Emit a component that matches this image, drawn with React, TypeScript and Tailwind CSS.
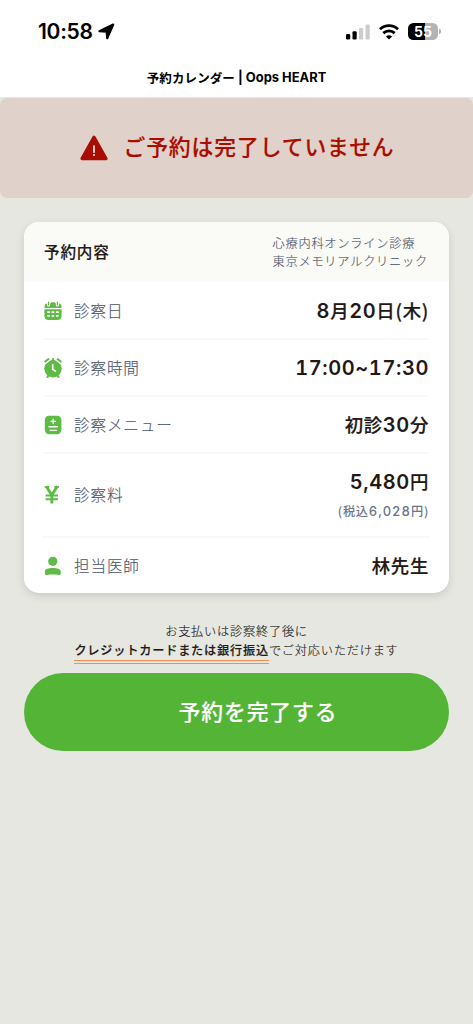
import React from 'react';

const CalendarIcon = () => (
  <svg viewBox="0 0 18 20" className="w-[18px] h-5" fill="#5fba46">
    <path d="M0.4 7V6.4C0.4 4 1.7 2.3 4 2.1h10c2.3 0.2 3.6 1.9 3.6 4.3V7z" />
    <path d="M4.6 0.8v3.2M13.4 0.8v3.2" stroke="#fff" strokeWidth="3.2" strokeLinecap="round" />
    <path d="M4.6 1.2v2.6M13.4 1.2v2.6M7.6 1.8h2.8" stroke="#5fba46" strokeWidth="1.3" strokeLinecap="round" />
    <path d="M0.4 8.2h17.2v6.4c0 3-1.6 4.5-4.5 4.5H4.9c-2.9 0-4.5-1.5-4.5-4.5z" />
    <g fill="#fff">
      <rect x="3.1" y="10.3" width="2.9" height="1.8" rx="0.7" />
      <rect x="7.5" y="10.3" width="2.9" height="1.8" rx="0.7" />
      <rect x="11.9" y="10.3" width="2.9" height="1.8" rx="0.7" />
      <rect x="3.1" y="14" width="2.9" height="1.8" rx="0.7" />
      <rect x="7.5" y="14" width="2.9" height="1.8" rx="0.7" />
      <rect x="11.9" y="14" width="2.9" height="1.8" rx="0.7" />
    </g>
  </svg>
);

const ClockIcon = () => (
  <svg viewBox="0 0 18 20" className="w-[18px] h-5" fill="#5fba46">
    <circle cx="9" cy="10.6" r="8.8" />
    <path d="M0 5.2L6.6 0M18 5.2L11.4 0" stroke="#fff" strokeWidth="3.6" />
    <path d="M0.6 4L5 0.7M17.4 4L13 0.7M9 0.2v2.5M4.2 17.5L3.2 19.8M13.8 17.5l1 2.3" stroke="#5fba46" strokeWidth="2" fill="none" />
    <path d="M8.7 6.8v4.4l2.7 1.9" stroke="#fff" strokeWidth="1.7" fill="none" strokeLinecap="round" />
  </svg>
);

const MenuIcon = () => (
  <svg viewBox="0 0 18 20" className="w-[18px] h-5">
    <rect x="0.8" y="0.8" width="16.6" height="18.4" rx="4.2" fill="#5fba46" />
    <path d="M9.2 4.3v4.2M7.1 6.4h4.2M5 11.7h8.4M6.2 15.4h6" stroke="#fff" strokeWidth="1.4" strokeLinecap="round" />
  </svg>
);

const YenIcon = () => (
  <svg viewBox="0 0 18 20" className="w-[18px] h-5" fill="none" stroke="#5fba46">
    <path d="M2.2 1.2L7.8 10L13.4 1.2M7.8 9.5V18.6" strokeWidth="2.9" />
    <path d="M0.7 1.9h4.6M10.3 1.9h4.6" strokeWidth="1.6" />
    <path d="M1.6 10.6h12.4M1.6 14.2h12.4" strokeWidth="2" />
  </svg>
);

const UserIcon = () => (
  <svg viewBox="0 0 18 20" className="w-[18px] h-5" fill="#5fba46">
    <circle cx="8.8" cy="5.3" r="4.6" />
    <path d="M0.8 15.4C0.8 13 4.6 11.9 8.8 11.9s8 1.1 8 3.5v1.9c0 1-0.7 1.7-1.7 1.6-4.1-0.5-8.3-0.5-12.5 0C1.5 19 0.8 18.3 0.8 17.3z" />
  </svg>
);

// digits are set in Inter, a little larger than the kanji next to them
const Mixed = ({ text, latin }: { text: string; latin: string }) => (
  <>
    {text.split(/([0-9:~,]+)/).map((t, i) =>
      i % 2 ? <span key={i} className={latin}>{t}</span> : t
    )}
  </>
);

const rows = [
  { icon: <CalendarIcon />, label: '診察日', value: '8月20日(木)' },
  { icon: <ClockIcon />, label: '診察時間', value: '17:00~17:30' },
  { icon: <MenuIcon />, label: '診察メニュー', value: '初診30分' },
  { icon: <YenIcon />, label: '診察料', value: '5,480円', note: '(税込6,028円)' },
  { icon: <UserIcon />, label: '担当医師', value: '林先生' },
];

export default function App() {
  return (
    <div className="w-full h-screen overflow-hidden bg-[#e6e7e1] text-[#231815] font-['Noto_Sans_CJK_JP',sans-serif]">
      <header className="h-[97px] bg-white text-black">
        <div className="h-[63px] flex items-center justify-between pl-[38px] pr-[32px]">
          <div className="flex items-center gap-[5px]">
            <span className="font-['Inter',sans-serif] font-semibold text-[21px] leading-none tracking-[-0.3px]">10:58</span>
            <svg viewBox="0 0 17 17" className="w-[17px] h-[17px]">
              <path d="M1.4 8.2L15.2 1.6L9.2 15.2L8.7 8.6z" fill="#000" stroke="#000" strokeWidth="2.2" strokeLinejoin="round" />
            </svg>
          </div>
          <div className="flex items-center">
            <svg viewBox="0 0 24 16" className="w-6 h-4">
              <rect x="0" y="10" width="4.2" height="5.5" rx="1.2" />
              <rect x="6.5" y="7.2" width="4.2" height="8.3" rx="1.2" />
              <rect x="13" y="4" width="4.2" height="11.5" rx="1.2" fill="#ccc" />
              <rect x="19.5" y="0.6" width="4.2" height="14.9" rx="1.2" fill="#ccc" />
            </svg>
            <svg viewBox="0 0 20 16" className="w-5 h-4 ml-[9px]" fill="none" stroke="#000">
              <path d="M1 5.3C6 0.4 14 0.4 19 5.3" strokeWidth="2.8" />
              <path d="M4.3 9.1C7.6 6.1 12.4 6.1 15.7 9.1" strokeWidth="2.8" />
              <path d="M6.9 12.4C8.8 10.7 11.2 10.7 13.1 12.4L10 15.4z" fill="#000" stroke="none" />
            </svg>
            <div className="ml-[9px] w-[30.5px] h-[17px] rounded-[5.5px] bg-[linear-gradient(90deg,#000_55%,#b3b3b3_55%)] flex items-center justify-center text-white font-['Inter',sans-serif] font-bold text-[14px] leading-none">
              55
            </div>
            <div className="ml-[1px] w-[1.8px] h-[5.5px] rounded-r-full bg-[#b3b3b3]" />
          </div>
        </div>
        <div className="h-[30px] flex items-center justify-center leading-none whitespace-pre">
          <span className="font-bold text-[12.5px] tracking-[0.1px]">予約カレンダー</span>
          <span className="font-['Inter',sans-serif] font-bold text-[12.9px]"> | Oops HEART</span>
        </div>
      </header>

      <div className="mt-px h-[99.5px] rounded-[7px] bg-[#e0d1ca] text-[#a90d00] flex items-center justify-center gap-[15px] pl-[2px]">
        <svg viewBox="0 0 28 26" className="w-7 h-[26px]">
          <path d="M14 2.4L25.9 23.5H2.1z" fill="#a90d00" stroke="#a90d00" strokeWidth="3.4" strokeLinejoin="round" />
          <path d="M14 11v6.2" stroke="#fff" strokeWidth="1.6" strokeLinecap="round" />
          <circle cx="14" cy="20" r="0.9" fill="#fff" />
        </svg>
        <h1 className="text-[21.8px] leading-none font-medium tracking-[0.9px] pb-[3px] [-webkit-text-stroke:0.15px]">ご予約は完了していません</h1>
      </div>

      <main className="px-6 pt-[24.5px]">
        <section className="rounded-[15px] bg-white overflow-hidden shadow-[0_3px_8px_rgba(0,0,0,0.12)]">
          <div className="h-[60px] pl-5 pr-[21px] flex items-center justify-between bg-[#fafbf7]">
            <h2 className="text-[15.6px] font-medium tracking-[0.8px] [-webkit-text-stroke:0.15px]">予約内容</h2>
            <p className="text-[12.2px] leading-[18px] font-light tracking-[0.78px] text-[#4d576c] [-webkit-text-stroke:0.12px]">
              心療内科オンライン診療<br />東京メモリアルクリニック
            </p>
          </div>
          <div className="pl-[19px] pr-5 pt-px">
            {rows.map((r, i) => (
              <div key={r.label} className={`flex items-center justify-between ${r.note ? 'h-[84px]' : i < rows.length - 1 ? 'h-[57px] border-b-2' : 'h-[55px]'} ${r.note ? 'border-b-2' : ''} border-[#f8f8f9]`}>
                <div className="flex items-center gap-[12px] pl-px">
                  {r.icon}
                  <span className="text-[15.6px] leading-none font-light tracking-[0.85px] text-[#4a556b] [-webkit-text-stroke:0.12px]">{r.label}</span>
                </div>
                <div className="text-right pb-[2px]">
                  <p className="text-[18.4px] leading-[28px] font-medium tracking-[0.7px] [-webkit-text-stroke:0.2px]">
                    <Mixed text={r.value} latin="font-['Inter',sans-serif] text-[20px] leading-none font-semibold tabular-nums tracking-[0.6px] [-webkit-text-stroke:0px]" />
                  </p>
                  {r.note && (
                    <p className="mt-[5px] text-[12.2px] leading-[22px] font-medium tracking-[0.75px] text-[#6b7488]">
                      <Mixed text={r.note} latin="font-['Inter',sans-serif] text-[13px] leading-none font-medium tabular-nums tracking-[1px]" />
                    </p>
                  )}
                </div>
              </div>
            ))}
          </div>
        </section>

        <p className="mt-[29px] text-center text-[12.2px] leading-[19px] tracking-[0.78px] font-light whitespace-nowrap [-webkit-text-stroke:0.12px]">
          お支払いは診察終了後に<br />
          <span className="inline-block border-b-[4px] border-double border-[#f58d50] font-medium [-webkit-text-stroke:0.15px]">クレジットカードまたは銀行振込</span>でご対応いただけます
        </p>

        <button className="mt-[9px] w-full h-[78px] rounded-full bg-[#53b436] text-white text-[21.8px] leading-none font-medium tracking-[0.9px] pl-[43px] pb-[3px] [-webkit-text-stroke:0.15px]">
          予約を完了する
        </button>
      </main>
    </div>
  );
}
